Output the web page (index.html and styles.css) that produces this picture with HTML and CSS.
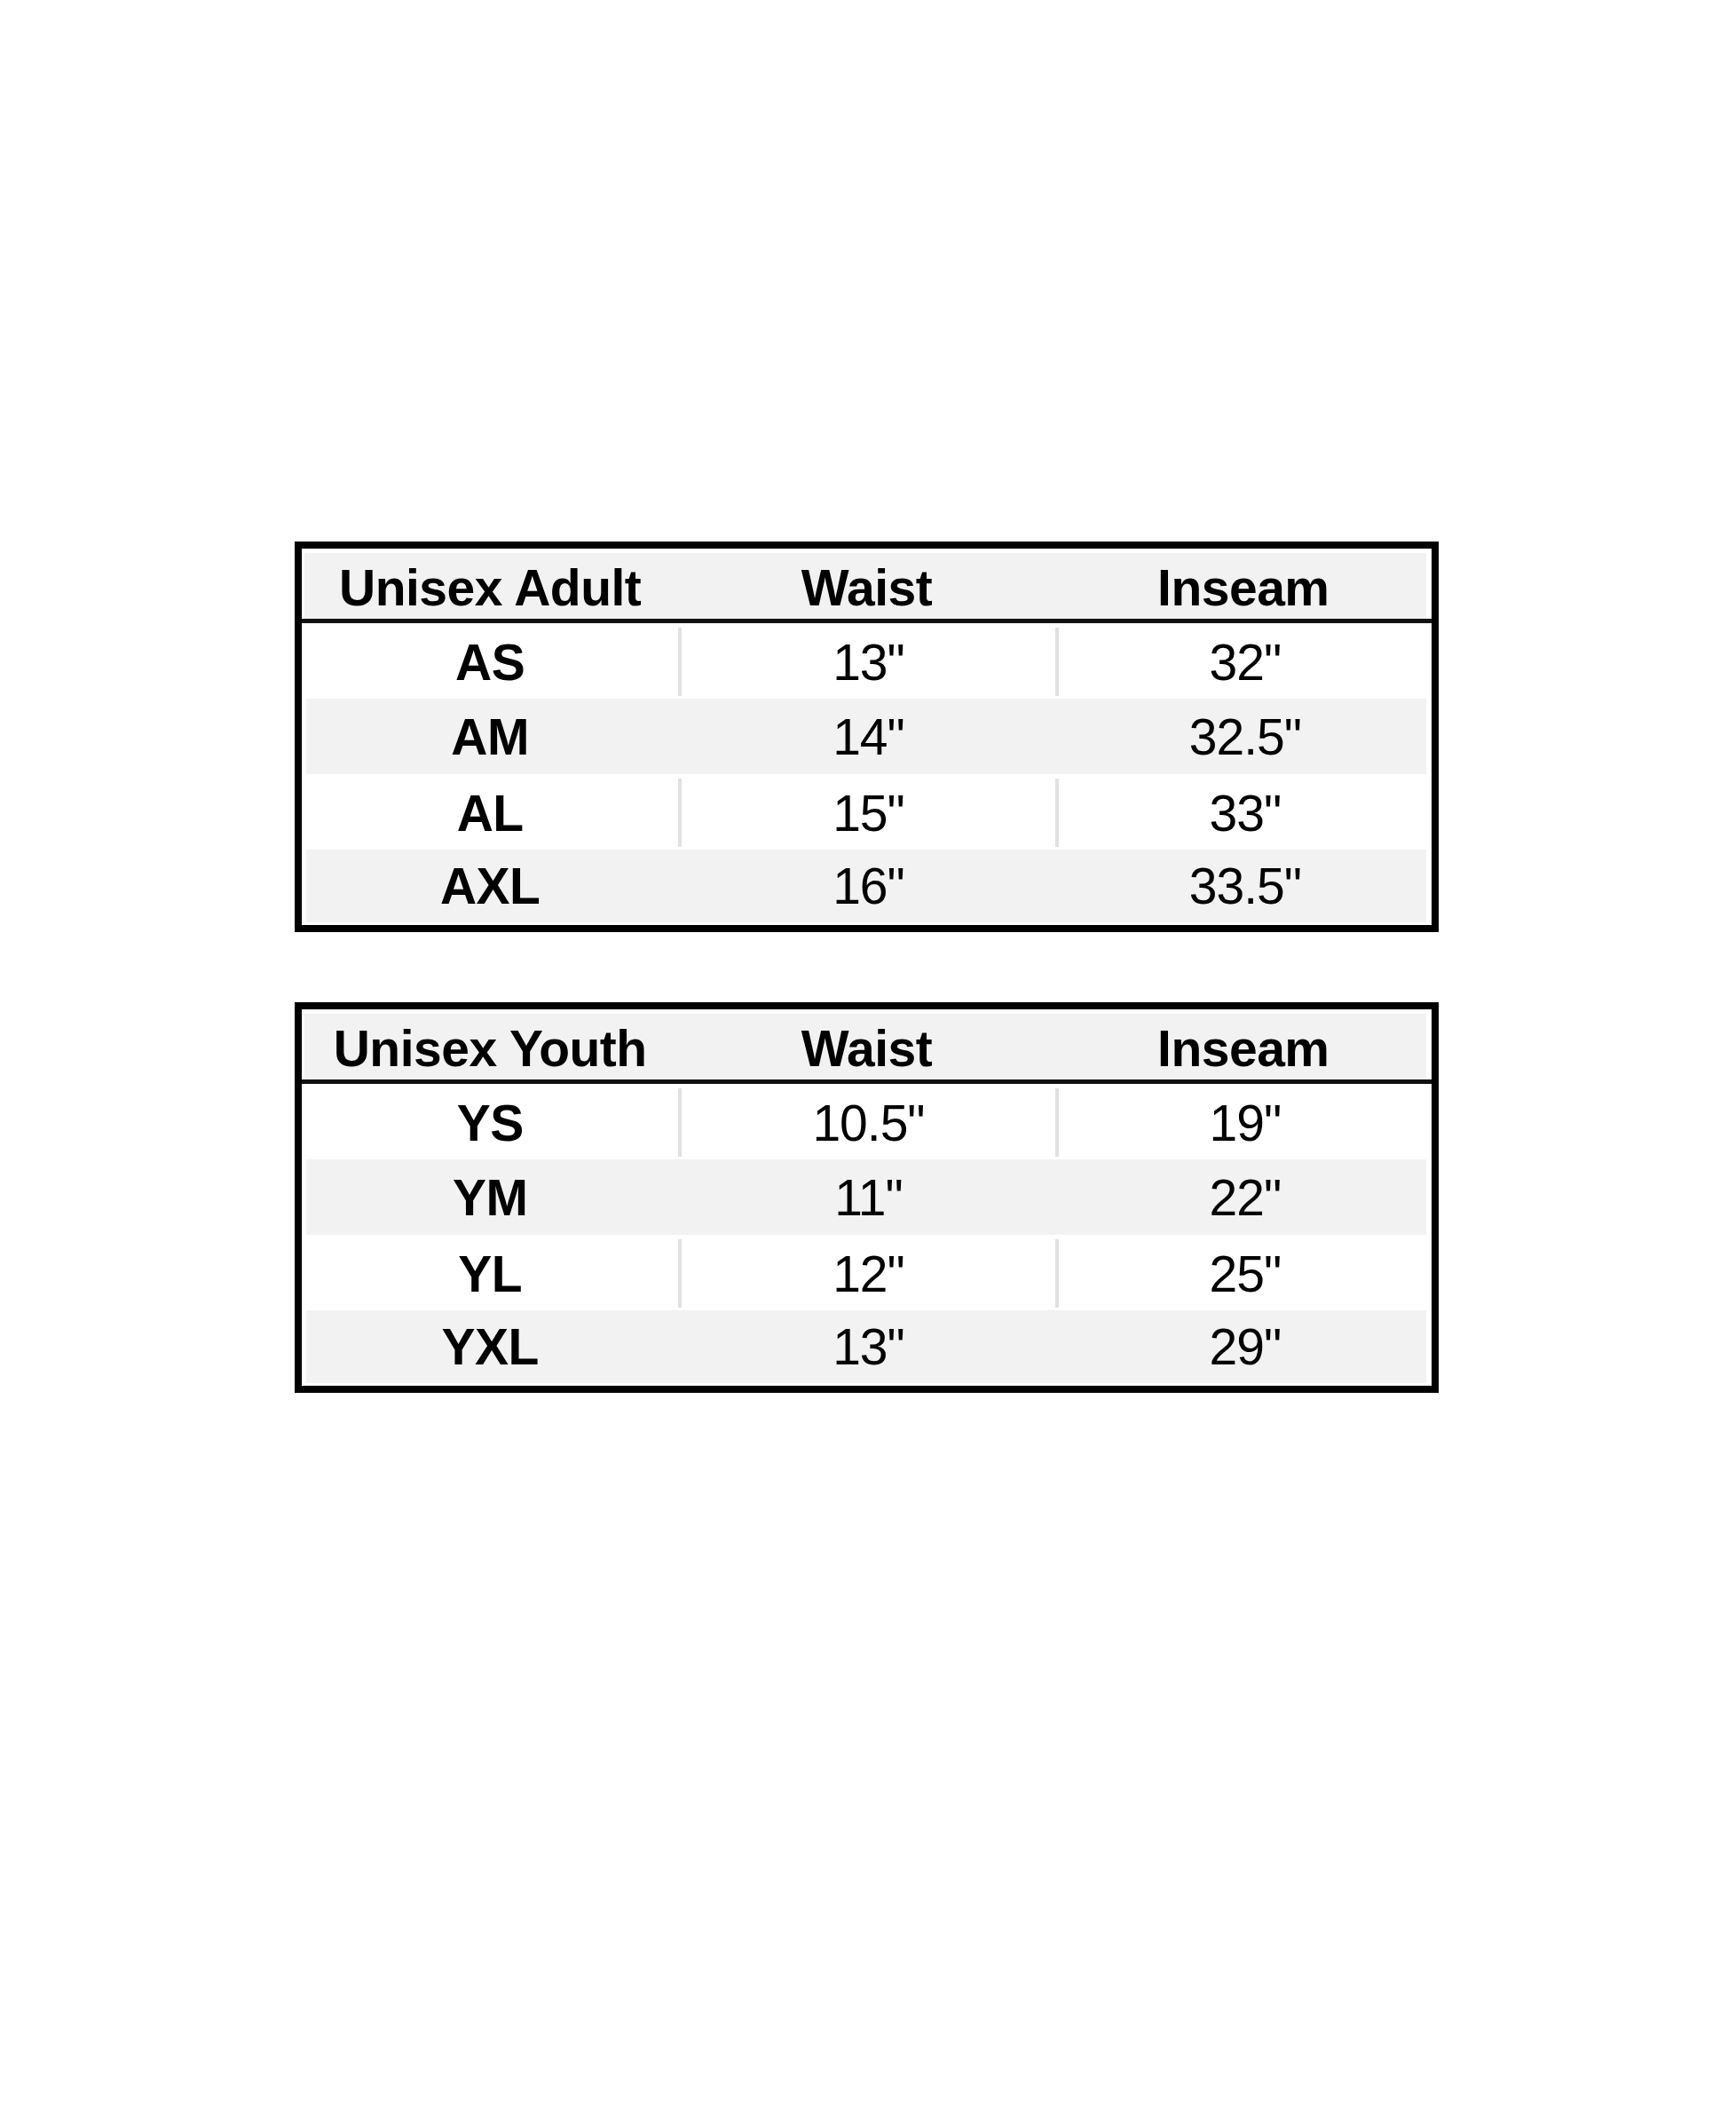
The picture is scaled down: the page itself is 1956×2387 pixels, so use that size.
FILE: index.html
```html
<!DOCTYPE html>
<html lang="en">
<head>
<meta charset="utf-8">
<title>Size Chart</title>
<link rel="stylesheet" href="styles.css">
</head>
<body>
<main class="page">
  <section class="chart">
    <div class="head">
      <div class="hcell">Unisex Adult</div>
      <div class="hcell">Waist</div>
      <div class="hcell">Inseam</div>
    </div>
    <div class="rule"></div>
    <div class="rows">
      <div class="row"><div class="cell size">AS</div><div class="cell">13"</div><div class="cell">32"</div></div>
      <div class="row alt"><div class="cell size">AM</div><div class="cell">14"</div><div class="cell">32.5"</div></div>
      <div class="row"><div class="cell size">AL</div><div class="cell">15"</div><div class="cell">33"</div></div>
      <div class="row alt"><div class="cell size">AXL</div><div class="cell">16"</div><div class="cell">33.5"</div></div>
    </div>
  </section>
  <section class="chart">
    <div class="head">
      <div class="hcell">Unisex Youth</div>
      <div class="hcell">Waist</div>
      <div class="hcell">Inseam</div>
    </div>
    <div class="rule"></div>
    <div class="rows">
      <div class="row"><div class="cell size">YS</div><div class="cell">10.5"</div><div class="cell">19"</div></div>
      <div class="row alt"><div class="cell size">YM</div><div class="cell">11"</div><div class="cell">22"</div></div>
      <div class="row"><div class="cell size">YL</div><div class="cell">12"</div><div class="cell">25"</div></div>
      <div class="row alt"><div class="cell size">YXL</div><div class="cell">13"</div><div class="cell">29"</div></div>
    </div>
  </section>
</main>
</body>
</html>
```

FILE: styles.css
```css
html, body {
  margin: 0;
  padding: 0;
  background: #ffffff;
}

body {
  font-family: "Liberation Sans", Arial, sans-serif;
  color: #000;
}

.page {
  display: flex;
  flex-direction: column;
  gap: 79px;
  padding: 610px 0 0 332px;
}

.chart {
  width: 1289px;
  box-sizing: border-box;
  border: 8px solid #000;
  background: #fff;
}

.head {
  display: grid;
  grid-template-columns: repeat(3, 1fr);
  height: 79px;
  box-sizing: border-box;
  padding-top: 8px;
  background: #f2f2f2;
  box-shadow: inset 0 5px 0 #fff, inset 3px 0 0 #fff, inset -6px 0 0 #fff;
}

.hcell {
  display: flex;
  align-items: center;
  justify-content: center;
  font-weight: bold;
  font-size: 57px;
  letter-spacing: -0.5px;
}

.rule {
  height: 5px;
  background: #111;
}

.row {
  display: grid;
  grid-template-columns: repeat(3, 1fr);
  height: 85px;
  box-sizing: border-box;
  padding: 5px 0 3px;
}

.row .cell + .cell {
  border-left: 4px solid #e1e1e1;
}

.row.alt {
  padding: 0;
  background: #f2f2f2;
  box-shadow: inset 5px 0 0 #fff, inset -6px 0 0 #fff;
}

.row.alt:last-child {
  padding-bottom: 3px;
  box-shadow: inset 5px 0 0 #fff, inset -6px 0 0 #fff, inset 0 -3px 0 #fff;
}

.row.alt .cell + .cell {
  border-left-color: transparent;
}

.cell {
  display: flex;
  align-items: center;
  justify-content: center;
  font-size: 57px;
  letter-spacing: -1px;
  box-sizing: border-box;
}

.cell.size {
  font-weight: bold;
  letter-spacing: -0.5px;
}
```
